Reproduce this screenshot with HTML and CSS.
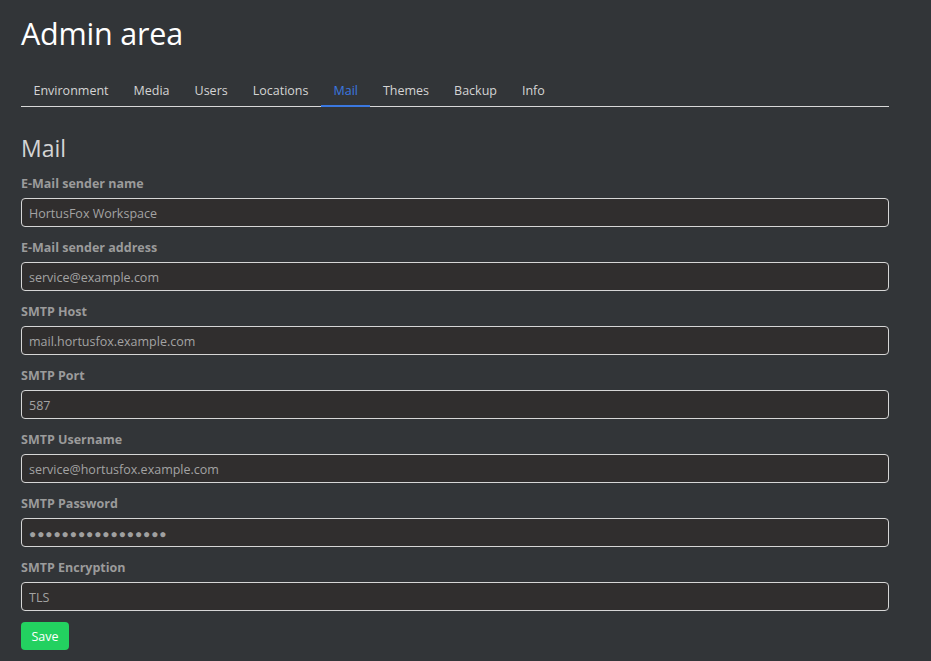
FILE: index.html
```html
<!DOCTYPE html>
<html lang="en">
<head>
<meta charset="utf-8">
<title>Admin area</title>
<link rel="stylesheet" href="styles.css">
</head>
<body>
<div class="page">
  <h1 class="title">Admin area</h1>
  <nav class="tabs">
    <a class="tab">Environment</a>
    <a class="tab">Media</a>
    <a class="tab">Users</a>
    <a class="tab">Locations</a>
    <a class="tab active">Mail</a>
    <a class="tab">Themes</a>
    <a class="tab">Backup</a>
    <a class="tab">Info</a>
  </nav>
  <h2 class="section">Mail</h2>
  <form class="form">
    <div class="field">
      <label class="label">E-Mail sender name</label>
      <input class="input" type="text" value="HortusFox Workspace">
    </div>
    <div class="field">
      <label class="label">E-Mail sender address</label>
      <input class="input" type="text" value="service@example.com">
    </div>
    <div class="field">
      <label class="label">SMTP Host</label>
      <input class="input" type="text" value="mail.hortusfox.example.com">
    </div>
    <div class="field">
      <label class="label">SMTP Port</label>
      <input class="input" type="text" value="587">
    </div>
    <div class="field">
      <label class="label">SMTP Username</label>
      <input class="input" type="text" value="service@hortusfox.example.com">
    </div>
    <div class="field">
      <label class="label">SMTP Password</label>
      <input class="input password" type="text" value="●●●●●●●●●●●●●●●●●">
    </div>
    <div class="field">
      <label class="label">SMTP Encryption</label>
      <input class="input" type="text" value="TLS">
    </div>
    <button class="button" type="button">Save</button>
  </form>
</div>
</body>
</html>
```

FILE: styles.css
```css
html, body {
  margin: 0;
  padding: 0;
  background: #323538;
  height: 100%;
}
body {
  font-family: "Open Sans", "Noto Sans", sans-serif;
  color: #d0d0d0;
}
.page {
  width: 868px;
  padding: 13px 0 0 21px;
}
.title {
  margin: 0;
  font-size: 30.5px;
  font-weight: 400;
  color: #ffffff;
  line-height: 40px;
  letter-spacing: -0.2px;
}
.tabs {
  display: flex;
  margin-top: 24px;
  border-bottom: 1px solid #d8d8d8;
}
.tab {
  display: block;
  padding: 0 12.5px;
  font-size: 12.5px;
  line-height: 28px;
  color: #d4d4d4;
  border-bottom: 2px solid transparent;
  margin-bottom: -1px;
}
.tab.active {
  color: #3b78e0;
  border-bottom-color: #3b78e0;
}
.section {
  margin: 26px 0 0 0;
  font-size: 23px;
  font-weight: 400;
  line-height: 30px;
  color: #d4d4d4;
}
.form {
  display: flex;
  flex-direction: column;
  align-items: flex-start;
  margin-top: 11px;
}
.field {
  width: 100%;
  display: flex;
  flex-direction: column;
  margin-bottom: 11px;
}
.label {
  font-size: 12.5px;
  font-weight: 700;
  color: #9b9b9b;
  line-height: 20px;
  margin-bottom: 4px;
}
.input {
  box-sizing: border-box;
  width: 100%;
  height: 29px;
  margin: 0;
  padding: 1px 7px 0;
  font-family: "Open Sans", "Noto Sans", sans-serif;
  font-size: 12.5px;
  color: #a3a3a3;
  background: #302e2e;
  border: 1px solid #d6d6d6;
  border-radius: 4px;
  outline: none;
}
.input.password {
  font-size: 12px;
  letter-spacing: 0.9px;
  color: #a0a0a0;
}
.button {
  margin-top: 0;
  height: 28px;
  padding: 0 10.5px;
  background: #23d160;
  color: #ffffff;
  border: none;
  border-radius: 4px;
  font-family: "Open Sans", "Noto Sans", sans-serif;
  font-size: 12.5px;
}
```
